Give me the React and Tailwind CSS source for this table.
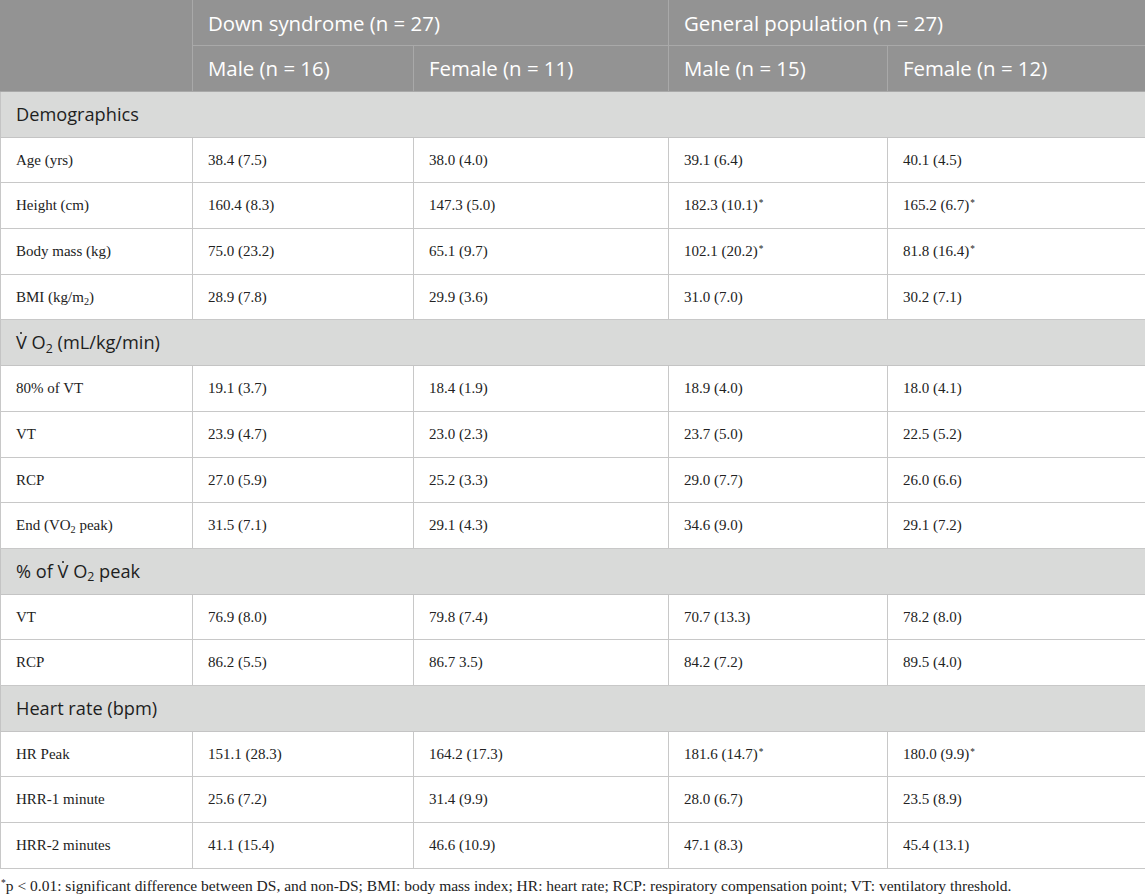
import React from "react";

const sans = { fontFamily: '"Open Sans", "Noto Sans", sans-serif' };
const serif = { fontFamily: '"Liberation Serif", "Times New Roman", serif' };

const Sub = ({ children }) => (
  <span className="relative top-[0.3em] text-[0.68em] leading-none">{children}</span>
);
const Star = () => (
  <span className="relative top-[-0.45em] ml-[1px] text-[0.62em] leading-none">*</span>
);

const VO2 = () => (
  <span>
    <span className="relative inline-block">
      V
      <span className="absolute left-1/2 top-[3px] h-[2px] w-[2px] -translate-x-1/2 rounded-full bg-[#1e1e1e]"></span>
    </span>
    {" "}O<Sub>2</Sub>
  </span>
);

const sections = [
  {
    title: "Demographics",
    rows: [
      ["Age (yrs)", "38.4 (7.5)", "38.0 (4.0)", "39.1 (6.4)", "40.1 (4.5)"],
      ["Height (cm)", "160.4 (8.3)", "147.3 (5.0)", ["182.3 (10.1)", true], ["165.2 (6.7)", true]],
      ["Body mass (kg)", "75.0 (23.2)", "65.1 (9.7)", ["102.1 (20.2)", true], ["81.8 (16.4)", true]],
      [<span key="b">BMI (kg/m<Sub>2</Sub>)</span>, "28.9 (7.8)", "29.9 (3.6)", "31.0 (7.0)", "30.2 (7.1)"],
    ],
  },
  {
    title: <span><VO2 /> (mL/kg/min)</span>,
    rows: [
      ["80% of VT", "19.1 (3.7)", "18.4 (1.9)", "18.9 (4.0)", "18.0 (4.1)"],
      ["VT", "23.9 (4.7)", "23.0 (2.3)", "23.7 (5.0)", "22.5 (5.2)"],
      ["RCP", "27.0 (5.9)", "25.2 (3.3)", "29.0 (7.7)", "26.0 (6.6)"],
      [<span key="e">End (VO<Sub>2</Sub> peak)</span>, "31.5 (7.1)", "29.1 (4.3)", "34.6 (9.0)", "29.1 (7.2)"],
    ],
  },
  {
    title: <span>% of <VO2 /> peak</span>,
    rows: [
      ["VT", "76.9 (8.0)", "79.8 (7.4)", "70.7 (13.3)", "78.2 (8.0)"],
      ["RCP", "86.2 (5.5)", "86.7 3.5)", "84.2 (7.2)", "89.5 (4.0)"],
    ],
  },
  {
    title: "Heart rate (bpm)",
    rows: [
      ["HR Peak", "151.1 (28.3)", "164.2 (17.3)", ["181.6 (14.7)", true], ["180.0 (9.9)", true]],
      ["HRR-1 minute", "25.6 (7.2)", "31.4 (9.9)", "28.0 (6.7)", "23.5 (8.9)"],
      ["HRR-2 minutes", "41.1 (15.4)", "46.6 (10.9)", "47.1 (8.3)", "45.4 (13.1)"],
    ],
  },
];

function Cell({ v }) {
  if (Array.isArray(v)) {
    return (
      <>
        {v[0]}
        {v[1] && <Star />}
      </>
    );
  }
  return v;
}

export default function App() {
  return (
    <div className="w-[1145px] bg-white">
      <table className="w-[1145px] table-fixed border-collapse text-[15px] text-[#222]" style={serif}>
        <colgroup>
          <col className="w-[192px]" />
          <col className="w-[221px]" />
          <col className="w-[255px]" />
          <col className="w-[219px]" />
          <col className="w-[258px]" />
        </colgroup>
        <thead>
          <tr className="h-[45px] bg-[#939393] text-white text-[20.4px]" style={sans}>
            <th rowSpan={2} className="border border-[#a9a9a9] border-t-[#939393] border-l-[#939393]"></th>
            <th colSpan={2} className="border border-[#a9a9a9] border-t-[#939393] px-[15px] text-left font-normal">
              Down syndrome (n = 27)
            </th>
            <th colSpan={2} className="border border-[#a9a9a9] border-t-[#939393] border-r-[#939393] px-[15px] text-left font-normal">
              General population (n = 27)
            </th>
          </tr>
          <tr className="h-[46px] bg-[#939393] text-white text-[20.4px]" style={sans}>
            <th className="border border-[#a9a9a9] px-[15px] text-left font-normal">Male (n = 16)</th>
            <th className="border border-[#a9a9a9] px-[15px] text-left font-normal">Female (n = 11)</th>
            <th className="border border-[#a9a9a9] px-[15px] text-left font-normal">Male (n = 15)</th>
            <th className="border border-[#a9a9a9] border-r-[#939393] px-[15px] text-left font-normal">Female (n = 12)</th>
          </tr>
        </thead>
        <tbody>
          {sections.map((s, si) => (
            <React.Fragment key={si}>
              <tr className="h-[45.7px] bg-[#d9dad9]">
                <td colSpan={5} className="border border-[#c4c4c4] px-[15px] text-[18.2px] text-[#1e1e1e]" style={sans}>
                  {s.title}
                </td>
              </tr>
              {s.rows.map((r, ri) => (
                <tr key={ri} className="h-[45.7px]">
                  {r.map((c, ci) => (
                    <td key={ci} className="border border-[#c8c8c8] px-[15px]">
                      <Cell v={c} />
                    </td>
                  ))}
                </tr>
              ))}
            </React.Fragment>
          ))}
        </tbody>
      </table>
      <p className="mt-[8px] text-[15.5px] leading-[18px] text-[#222]" style={serif}>
        <Star />p &lt; 0.01: significant difference between DS, and non-DS; BMI: body mass index; HR: heart rate; RCP: respiratory compensation point; VT: ventilatory threshold.
      </p>
    </div>
  );
}
